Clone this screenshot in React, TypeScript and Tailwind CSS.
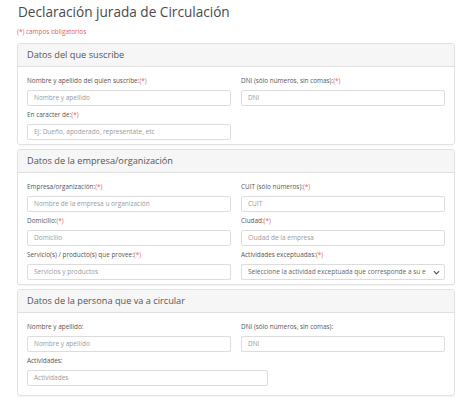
import React from "react";

const font = { fontFamily: '"Open Sans", "Liberation Sans", sans-serif' };

function Req() {
  return <span className="text-[#e0625d]">(*)</span>;
}

function Field({ label, req, placeholder, className = "" }: { label: string; req?: boolean; placeholder: string; className?: string }) {
  return (
    <div className={"mb-1 " + className}>
      <div className="h-[10px] text-[6.4px] leading-[10px] text-[#555] mb-1 whitespace-nowrap">
        {label}
        {req && <Req />}
      </div>
      <div className="h-[16px] border border-[#dcdcdc] rounded-[2px] bg-white px-[6px] flex items-center text-[6.5px] text-[#9a9a9a] whitespace-nowrap overflow-hidden">
        {placeholder}
      </div>
    </div>
  );
}

function SelectField({ label, placeholder }: { label: string; placeholder: string }) {
  return (
    <div className="mb-1">
      <div className="h-[10px] text-[6.4px] leading-[10px] text-[#555] mb-1 whitespace-nowrap">
        {label}
        <Req />
      </div>
      <div className="h-[16px] border border-[#dcdcdc] rounded-[2px] bg-white pl-[6px] pr-[4px] flex items-center text-[6.5px] text-[#666] whitespace-nowrap overflow-hidden">
        <span className="flex-1 overflow-hidden">{placeholder}</span>
        <svg width="7" height="5" viewBox="0 0 8 5" className="ml-1 shrink-0">
          <path d="M1 1 L4 4 L7 1" fill="none" stroke="#555" strokeWidth="1.4" />
        </svg>
      </div>
    </div>
  );
}

function Card({ title, children, last }: { title: string; children: React.ReactNode; last?: boolean }) {
  return (
    <div className="border border-[#e1e1e1] rounded-[3px] bg-white mb-[4px] shadow-[0_1px_1px_rgba(0,0,0,0.04)]">
      <div className="h-[23px] bg-[#f6f6f6] border-b border-[#e1e1e1] flex items-center px-[9px] text-[9.2px] text-[#555] rounded-t-[3px]">
        {title}
      </div>
      <div className={last ? "px-[9px] pt-[9px] pb-[5px]" : "px-[9px] pt-[9px] pb-0"}>{children}</div>
    </div>
  );
}

export default function App() {
  return (
    <div className="w-[474px] h-[408px] bg-white overflow-hidden" style={font}>
      <div className="pl-[17px] pr-[19px] pt-[1px]">
        <h1 className="text-[13.6px] leading-[22px] text-[#4a4a4a] ml-[1px]">Declaración jurada de Circulación</h1>
        <div className="text-[6.4px] leading-[10px] text-[#e0625d] mt-[4px] mb-[6px]">(*) campos obligatorios</div>

        <Card title="Datos del que suscribe">
          <div className="grid grid-cols-2 gap-x-[10px]">
            <Field label="Nombre y apellido del quien suscribe:" req placeholder="Nombre y apellido" />
            <Field label="DNI (sólo números, sin comas):" req placeholder="DNI" />
            <Field label="En caracter de:" req placeholder="Ej: Dueño, apoderado, representate, etc" />
          </div>
        </Card>

        <Card title="Datos de la empresa/organización">
          <div className="grid grid-cols-2 gap-x-[10px]">
            <Field label="Empresa/organización:" req placeholder="Nombre de la empresa u organización" />
            <Field label="CUIT (sólo números):" req placeholder="CUIT" />
            <Field label="Domicilio:" req placeholder="Domicilio" />
            <Field label="Ciudad:" req placeholder="Ciudad de la empresa" />
            <Field label="Servicio(s) / producto(s) que provee:" req placeholder="Servicios y productos" />
            <SelectField label="Actividades exceptuadas:" placeholder="Seleccione la actividad exceptuada que corresponde a su e" />
          </div>
        </Card>

        <Card title="Datos de la persona que va a circular" last>
          <div className="grid grid-cols-2 gap-x-[10px]">
            <Field label="Nombre y apellido:" placeholder="Nombre y apellido" />
            <Field label="DNI (sólo números, sin comas):" placeholder="DNI" />
          </div>
          <Field label="Actividades:" placeholder="Actividades" className="w-[241px]" />
        </Card>
      </div>
    </div>
  );
}
